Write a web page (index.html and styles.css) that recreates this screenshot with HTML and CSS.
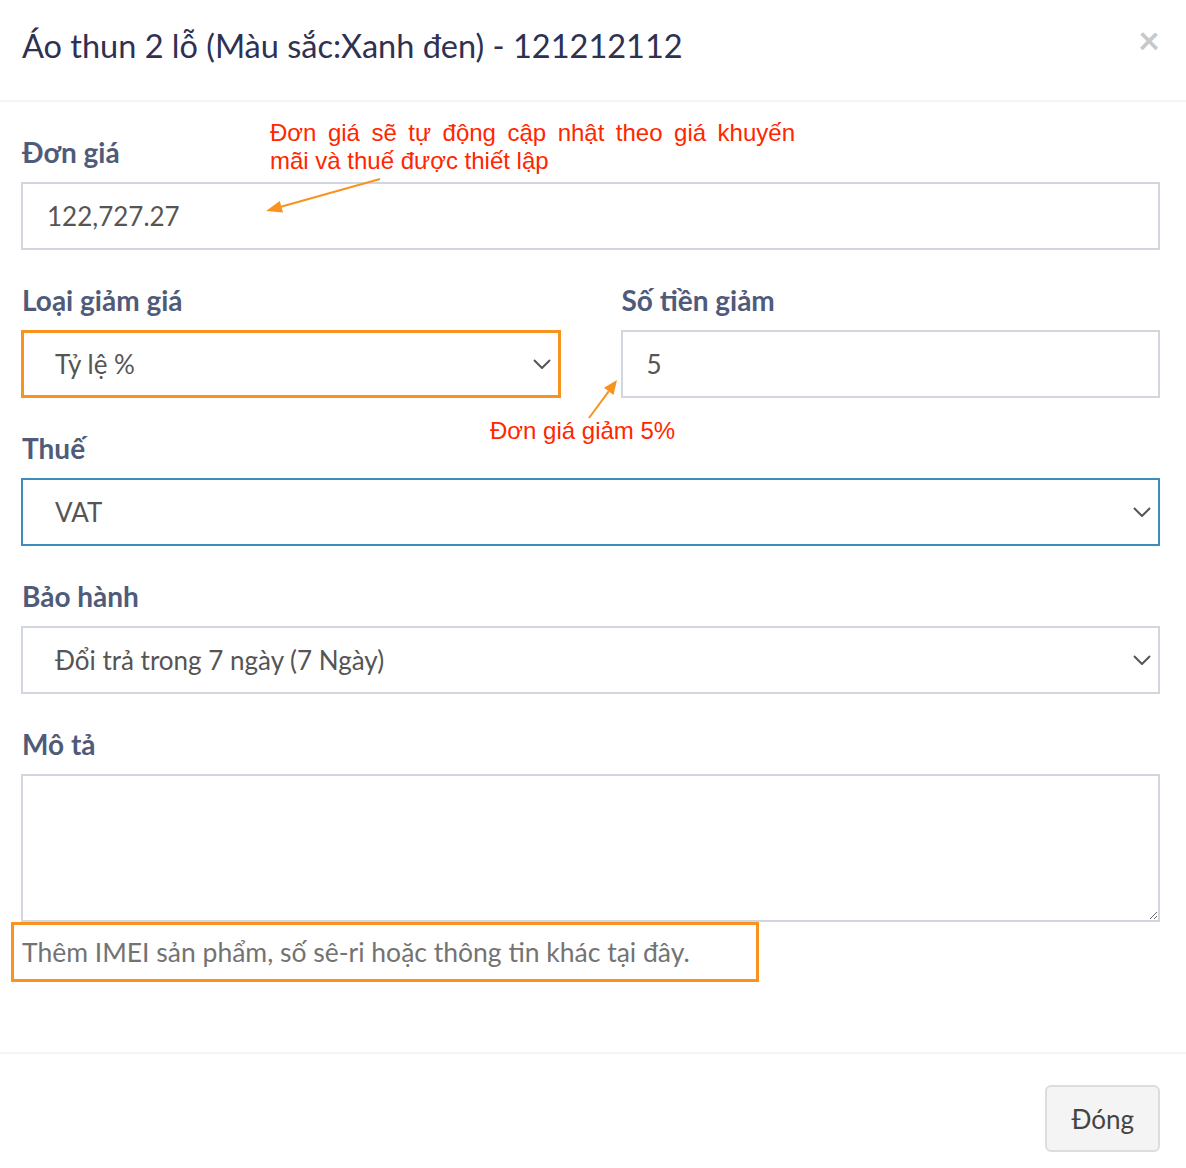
FILE: index.html
```html
<!DOCTYPE html>
<html lang="vi">
<head>
  <meta charset="UTF-8">
  <title>Chi tiết sản phẩm</title>
  <link rel="stylesheet" href="styles.css">
</head>
<body>
  <div class="modal">
    <!-- tiêu đề -->
    <div class="modal-header">
      <h4 class="modal-title">Áo thun 2 lỗ (Màu sắc:Xanh đen) - 121212112</h4>
      <span class="close">×</span>
    </div>

    <div class="modal-body">
      <div class="form-group">
        <label>Đơn giá</label>
        <input class="form-control" type="text" value="122,727.27">
      </div>

      <div class="row">
        <div class="form-group">
          <label>Loại giảm giá</label>
          <div class="form-control select highlight">
            <span>Tỷ lệ %</span>
            <svg class="chevron" width="18" height="10" viewBox="0 0 18 10"><path d="M1 1 L9 9 L17 1" fill="none" stroke="#555" stroke-width="2"/></svg>
          </div>
        </div>
        <div class="form-group">
          <label>Số tiền giảm</label>
          <input class="form-control" type="text" value="5">
        </div>
      </div>

      <div class="form-group">
        <label>Thuế</label>
        <div class="form-control select focus">
          <span>VAT</span>
          <svg class="chevron" width="18" height="10" viewBox="0 0 18 10"><path d="M1 1 L9 9 L17 1" fill="none" stroke="#555" stroke-width="2"/></svg>
        </div>
      </div>

      <div class="form-group">
        <label>Bảo hành</label>
        <div class="form-control select">
          <span>Đổi trả trong 7 ngày (7 Ngày)</span>
          <svg class="chevron" width="18" height="10" viewBox="0 0 18 10"><path d="M1 1 L9 9 L17 1" fill="none" stroke="#555" stroke-width="2"/></svg>
        </div>
      </div>

      <div class="form-group">
        <label>Mô tả</label>
        <textarea class="form-control textarea"></textarea>
        <p class="help-block">Thêm IMEI sản phẩm, số sê-ri hoặc thông tin khác tại đây.</p>
      </div>
    </div>

    <div class="modal-footer">
      <button class="btn">Đóng</button>
    </div>

    <!-- ghi chú hướng dẫn -->
    <p class="note note-price">Đơn giá sẽ tự động cập nhật theo giá khuyến mãi và thuế được thiết lập</p>
    <p class="note note-discount">Đơn giá giảm 5%</p>
    <div class="help-mark"></div>
    <svg class="arrows" width="1186" height="1168" viewBox="0 0 1186 1168">
      <line x1="380" y1="179" x2="280" y2="207" stroke="#f7931e" stroke-width="2"/>
      <polygon points="266,211 283,212.5 279.8,200.9" fill="#f7931e"/>
      <line x1="589" y1="418" x2="608.7" y2="391.3" stroke="#f7931e" stroke-width="2"/>
      <polygon points="617,380 613.5,394.9 603.9,387.7" fill="#f7931e"/>
    </svg>
  </div>
</body>
</html>
```

FILE: styles.css
```css
body {
  margin: 0;
  padding: 0;
  background: #fff;
  font-family: Lato, "Open Sans", sans-serif;
}

.modal {
  position: relative;
  width: 1186px;
  height: 1168px;
  overflow: hidden;
  background: #fff;
}

/* header */
.modal-header {
  display: flex;
  justify-content: space-between;
  align-items: flex-start;
  padding: 26px 28px 34px 22px;
  border-bottom: 2px solid #f4f4f4;
}
.modal-title {
  margin: 0;
  font-size: 32.5px;
  font-weight: 400;
  line-height: 40px;
  color: #2e3152;
}
.close {
  margin-top: 1px;
  margin-right: -2px;
  font-size: 38px;
  font-weight: 700;
  line-height: 24px;
  color: #c8c8c8;
}

/* body */
.modal-body {
  padding: 30px 26px 30px 21px;
}
.form-group {
  display: flow-root;
  margin-bottom: 30px;
}
.form-group label {
  display: block;
  margin-bottom: 10px;
  padding-left: 1px;
  font-size: 28px;
  font-weight: 700;
  line-height: 40px;
  color: #4f5b79;
}
.row {
  display: grid;
  grid-template-columns: 1fr 1fr;
  column-gap: 60px;
}
.row .form-group {
  min-width: 0;
}

.form-control {
  display: block;
  box-sizing: border-box;
  width: 100%;
  height: 68px;
  margin: 0;
  padding: 0 24px;
  border: 2px solid #d2d6de;
  border-radius: 0;
  background: #fff;
  font-family: Lato, "Open Sans", sans-serif;
  font-size: 26px;
  color: #555;
  outline: none;
}
.select {
  display: flex;
  align-items: center;
  justify-content: space-between;
  padding: 0 7px 0 32px;
}
.select.highlight {
  border: 3px solid #f7931e;
  padding-left: 31px;
}
.select.focus {
  border-color: #3c8dbc;
}
.chevron {
  flex: none;
}
.textarea {
  height: 148px;
  resize: vertical;
}
.help-block {
  margin: 10px 0 20px;
  padding-left: 1px;
  font-size: 26.5px;
  line-height: 40px;
  color: #737373;
}

/* footer */
.modal-footer {
  display: flex;
  justify-content: flex-end;
  padding: 31px 26px 16px;
  border-top: 2px solid #f4f4f4;
}
.btn {
  height: 67px;
  padding: 0 24px;
  border: 2px solid #ddd;
  border-radius: 6px;
  background: #f4f4f4;
  font-family: Lato, "Open Sans", sans-serif;
  font-size: 26px;
  color: #444;
}

/* annotations */
.note {
  position: absolute;
  margin: 0;
  font-family: "Liberation Sans", Arial, sans-serif;
  font-size: 24px;
  line-height: 28px;
  color: #ff2600;
}
.note-price {
  left: 270px;
  top: 119px;
  width: 525px;
  text-align: justify;
}
.note-discount {
  left: 490px;
  top: 417px;
}
.help-mark {
  position: absolute;
  left: 11px;
  top: 922px;
  width: 748px;
  height: 60px;
  box-sizing: border-box;
  border: 3px solid #f7931e;
}
.arrows {
  position: absolute;
  left: 0;
  top: 0;
  pointer-events: none;
}
```
